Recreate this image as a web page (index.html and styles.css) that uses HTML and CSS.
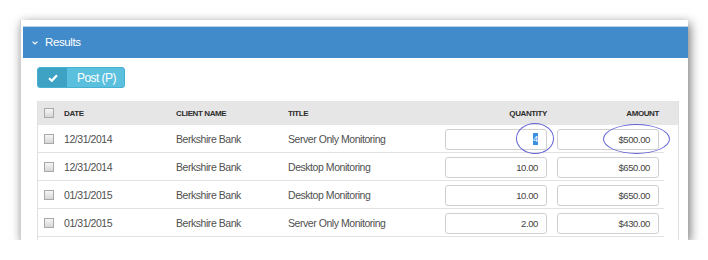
FILE: index.html
```html
<!DOCTYPE html>
<html>
<head>
<meta charset="utf-8">
<link rel="stylesheet" href="styles.css">
</head>
<body>
<div class="frame">
  <div class="panel-heading">
    <svg class="chev" width="6" height="4" viewBox="0 0 6 4"><polyline points="0.6,0.6 3,3 5.4,0.6" fill="none" stroke="#fff" stroke-width="1.2"/></svg>
    <span class="panel-title">Results</span>
  </div>
  <div class="panel-body">
    <div class="btn">
      <span class="btn-icon"><svg width="10" height="8" viewBox="0 0 10 8"><polyline points="1,4.2 3.8,6.8 9,1.2" fill="none" stroke="#fff" stroke-width="2.2"/></svg></span>
      <span class="btn-label">Post (P)</span>
    </div>
    <div class="table-wrap">
      <div class="thead grid">
        <span class="cb"></span>
        <span>DATE</span>
        <span>CLIENT NAME</span>
        <span>TITLE</span>
        <span class="num">QUANTITY</span>
        <span></span>
        <span class="num">AMOUNT</span>
      </div>
      <div class="tr grid first">
        <span class="cb"></span>
        <span>12/31/2014</span>
        <span>Berkshire Bank</span>
        <span>Server Only Monitoring</span>
        <span class="input"><span class="sel">4</span></span>
        <span></span>
        <span class="input">$500.00</span>
        <span class="ring ring-q"></span>
        <span class="ring ring-a"></span>
      </div>
      <div class="tr grid">
        <span class="cb"></span>
        <span>12/31/2014</span>
        <span>Berkshire Bank</span>
        <span>Desktop Monitoring</span>
        <span class="input">10.00</span>
        <span></span>
        <span class="input">$650.00</span>
      </div>
      <div class="tr grid">
        <span class="cb"></span>
        <span>01/31/2015</span>
        <span>Berkshire Bank</span>
        <span>Desktop Monitoring</span>
        <span class="input">10.00</span>
        <span></span>
        <span class="input">$650.00</span>
      </div>
      <div class="tr grid">
        <span class="cb"></span>
        <span>01/31/2015</span>
        <span>Berkshire Bank</span>
        <span>Server Only Monitoring</span>
        <span class="input">2.00</span>
        <span></span>
        <span class="input">$430.00</span>
      </div>
    </div>
  </div>
</div>
</body>
</html>
```

FILE: styles.css
```css
html, body {
  margin: 0;
  padding: 0;
  background: #fff;
}
body {
  font-family: "Liberation Sans", Arial, sans-serif;
}
.frame {
  margin: 20px 0 0 20px;
  width: 668px;
  height: 220px;
  box-sizing: border-box;
  padding: 6px 0 0 2px;
  background: #fff;
  overflow: hidden;
  border-left: 1px solid #d0d0d0;
  box-shadow: 2px 3px 10px rgba(0, 0, 0, 0.55);
}
.panel-heading {
  height: 31px;
  border-top: 1px solid #b9d3ec;
  background: #428bca;
  display: flex;
  align-items: center;
  padding-left: 9px;
  color: #fff;
}
.chev {
  display: block;
  margin-right: 7px;
}
.panel-title {
  font-size: 11.5px;
  letter-spacing: -0.4px;
  line-height: 1;
}
.panel-body {
  padding: 9px 0 0 14px;
}
.btn {
  display: flex;
  width: 88px;
  height: 21px;
  border-radius: 3px;
  overflow: hidden;
  box-sizing: border-box;
  border: 1px solid #46b0d2;
  background: #5bc0de;
  color: #fff;
}
.btn-icon {
  width: 29px;
  background: #3ea2c4;
  display: flex;
  align-items: center;
  justify-content: center;
}
.btn-label {
  flex: 1;
  display: flex;
  align-items: center;
  justify-content: center;
  font-size: 12px;
  letter-spacing: -0.55px;
  padding-left: 2px;
}
.table-wrap {
  margin-top: 13px;
  width: 642px;
  height: 160px;
  box-sizing: border-box;
  border-left: 1px solid #e0e0e0;
  border-right: 1px solid #e0e0e0;
}
.grid {
  display: grid;
  grid-template-columns: 26px 112px 112px 157px 102px 10px 102px 5px;
  align-items: center;
}
.thead {
  height: 24px;
  background: #e6e6e6;
  font-size: 8px;
  letter-spacing: -0.4px;
  font-weight: bold;
  color: #2e2e2e;
}
.tr {
  position: relative;
  width: 626px;
  height: 27px;
  border-bottom: 1px solid #e2e2e2;
  font-size: 10.5px;
  letter-spacing: -0.45px;
  color: #505050;
}
.num {
  text-align: right;
}
.cb {
  display: block;
  width: 8px;
  height: 8px;
  margin-left: 6px;
  border: 1px solid #a8a8a8;
  background: linear-gradient(#f6f6f6, #d6d6d6);
}
.input {
  display: flex;
  justify-content: flex-end;
  align-items: center;
  height: 21px;
  box-sizing: border-box;
  margin-top: 1px;
  padding-right: 8px;
  border: 1px solid #cfcfcf;
  border-radius: 3px;
  background: #fff;
  font-size: 9.5px;
  letter-spacing: -0.4px;
  color: #444;
}
.sel {
  background: #3b8ee0;
  color: #fff;
  padding: 1px 0;
  line-height: 1.1;
}
.ring {
  position: absolute;
  box-sizing: border-box;
  border: 1px solid #6262d6;
  border-radius: 50%;
}
.ring-q {
  left: 478px;
  top: -2px;
  width: 38px;
  height: 31px;
}
.ring-a {
  left: 565px;
  top: -1px;
  width: 67px;
  height: 30px;
}
```
